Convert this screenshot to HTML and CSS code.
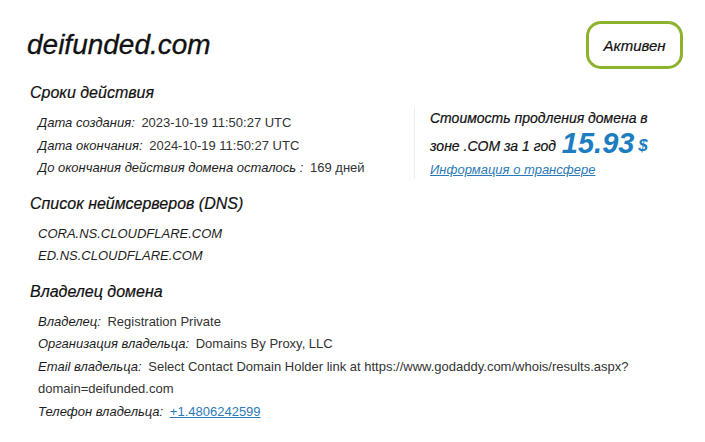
FILE: index.html
```html
<!DOCTYPE html>
<html lang="ru">
<head>
    <meta charset="UTF-8">
    <meta name="viewport" content="width=device-width, initial-scale=1.0">
    <title>deifunded.com</title>
    <link rel="stylesheet" href="styles.css">
</head>
<body>
    <div class="whois">
        <div class="whois-top">
            <h1 class="domain-name">deifunded.com</h1>
            <div class="status-badge">Активен</div>
        </div>

        <h2 class="section-title">Сроки действия</h2>
        <div class="dates-row">
            <div class="info-list">
                <div class="info-line"><span class="label">Дата создания:</span> <span class="value">2023-10-19 11:50:27 UTC</span></div>
                <div class="info-line"><span class="label">Дата окончания:</span> <span class="value">2024-10-19 11:50:27 UTC</span></div>
                <div class="info-line"><span class="label">До окончания действия домена осталось :</span> <span class="value">169 дней</span></div>
            </div>
            <div class="price-box">
                <div class="price-text">Стоимость продления домена в</div>
                <div class="price-text">зоне .COM за 1 год <span class="price">15.93</span> <span class="currency">$</span></div>
                <a class="transfer-link" href="#">Информация о трансфере</a>
            </div>
        </div>

        <h2 class="section-title">Список неймсерверов (DNS)</h2>
        <div class="info-list">
            <div class="info-line label">CORA.NS.CLOUDFLARE.COM</div>
            <div class="info-line label">ED.NS.CLOUDFLARE.COM</div>
        </div>

        <h2 class="section-title">Владелец домена</h2>
        <div class="info-list">
            <div class="info-line"><span class="label">Владелец:</span> <span class="value">Registration Private</span></div>
            <div class="info-line"><span class="label">Организация владельца:</span> <span class="value">Domains By Proxy, LLC</span></div>
            <div class="info-line"><span class="label">Email владельца:</span> <span class="value">Select Contact Domain Holder link at https://www.godaddy.com/whois/results.aspx?<br>domain=deifunded.com</span></div>
            <div class="info-line"><span class="label">Телефон владельца:</span> <a class="value phone-link" href="#">+1.4806242599</a></div>
        </div>
    </div>
</body>
</html>
```

FILE: styles.css
```css
body {
    margin: 0;
    background: #fff;
    color: #1a1a1a;
    font-family: "Liberation Sans", Arial, sans-serif;
}
.whois {
    padding: 21px 22px 0 27px;
}
.whois-top {
    display: flex;
    justify-content: space-between;
    align-items: center;
}
.domain-name {
    margin: 0;
    font-size: 28px;
    font-weight: normal;
    font-style: italic;
    color: #111;
    -webkit-text-stroke: 0.3px #111;
}
.status-badge {
    width: 91px;
    height: 42px;
    border: 3px solid #8db32d;
    border-radius: 15px;
    display: flex;
    align-items: center;
    justify-content: center;
    font-style: italic;
    font-size: 15px;
    color: #111;
    -webkit-text-stroke: 0.2px #111;
}
.section-title {
    margin: 13px 0 8px 3px;
    font-size: 16px;
    line-height: 22px;
    font-weight: normal;
    font-style: italic;
    color: #111;
    -webkit-text-stroke: 0.2px #111;
}
.info-list {
    padding-left: 11px;
}
.info-line {
    font-size: 13px;
    line-height: 22.5px;
}
.label {
    font-style: italic;
    color: #1e1e1e;
}
.value {
    margin-left: 3px;
    color: #333;
}
.dates-row {
    display: grid;
    grid-template-columns: 387px 1fr;
}
.price-box {
    border-left: 1px solid #ececec;
    padding: 0 0 0 15px;
    margin-top: -5px;
    height: 72px;
}
.price-text {
    font-size: 14px;
    font-style: italic;
    color: #111;
    line-height: 22px;
    -webkit-text-stroke: 0.2px #111;
}
.price-text + .price-text {
    line-height: 28px;
}
.price {
    font-size: 29px;
    font-weight: bold;
    font-style: italic;
    color: #1c7dc0;
    -webkit-text-stroke: 0;
    margin-left: 2px;
    vertical-align: -2px;
}
.currency {
    font-size: 17px;
    font-weight: bold;
    font-style: italic;
    color: #1c7dc0;
    -webkit-text-stroke: 0;
}
.transfer-link {
    font-size: 13px;
    font-style: italic;
    color: #2a7ab8;
    line-height: 18px;
}
.phone-link {
    color: #2a7ab8;
}
```
